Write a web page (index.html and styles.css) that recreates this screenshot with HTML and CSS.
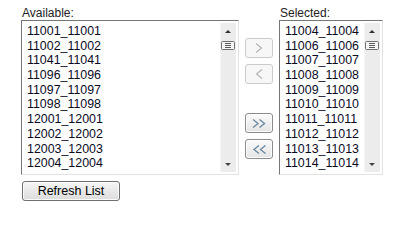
FILE: index.html
```html
<!DOCTYPE html>
<html lang="en">

<head>
    <meta charset="UTF-8">
    <title>List Picker</title>
    <link rel="stylesheet" href="styles.css">
</head>

<body>

    <div class="picker">
        <div class="column">
            <label class="caption">Available:</label>
            <div class="listbox listbox-wide">
                <ul class="items">
                    <li>11001_11001</li>
                    <li>11002_11002</li>
                    <li>11041_11041</li>
                    <li>11096_11096</li>
                    <li>11097_11097</li>
                    <li>11098_11098</li>
                    <li>12001_12001</li>
                    <li>12002_12002</li>
                    <li>12003_12003</li>
                    <li>12004_12004</li>
                </ul>
                <div class="scrollbar">
                    <span class="arrow arrow-up"></span>
                    <svg class="thumb" width="14" height="9" viewBox="0 0 14 9">
                        <rect x="0.5" y="0.5" width="13" height="8" rx="1" fill="#f5f5f5" stroke="#6f6f6f" />
                        <path d="M4 2.5h6M4 4.5h6M4 6.5h6" stroke="#5a5a5a" stroke-width="1" />
                    </svg>
                    <span class="spacer"></span>
                    <span class="arrow arrow-down"></span>
                </div>
            </div>
            <button class="refresh" type="button">Refresh List</button>
        </div>

        <div class="moves">
            <button class="move" type="button" disabled>
                <svg width="8" height="10" viewBox="0 0 8 10">
                    <path d="M1 0.5L6.5 5L1 9.5" fill="none" stroke="#b3b3b3" stroke-width="1.1" />
                </svg>
            </button>
            <button class="move" type="button" disabled>
                <svg width="8" height="10" viewBox="0 0 8 10">
                    <path d="M7 0.5L1.5 5L7 9.5" fill="none" stroke="#b3b3b3" stroke-width="1.1" />
                </svg>
            </button>
            <button class="move move-all" type="button">
                <svg width="15" height="9" viewBox="0 0 15 9">
                    <path d="M1 0.5L6 4.5L1 8.5M7.5 0.5L12.5 4.5L7.5 8.5" fill="none" stroke="#6c8aa2" stroke-width="1.4" />
                </svg>
            </button>
            <button class="move" type="button">
                <svg width="15" height="9" viewBox="0 0 15 9">
                    <path d="M7 0.5L2 4.5L7 8.5M13.5 0.5L8.5 4.5L13.5 8.5" fill="none" stroke="#6c8aa2" stroke-width="1.4" />
                </svg>
            </button>
        </div>

        <div class="column">
            <label class="caption">Selected:</label>
            <div class="listbox listbox-narrow">
                <ul class="items">
                    <li>11004_11004</li>
                    <li>11006_11006</li>
                    <li>11007_11007</li>
                    <li>11008_11008</li>
                    <li>11009_11009</li>
                    <li>11010_11010</li>
                    <li>11011_11011</li>
                    <li>11012_11012</li>
                    <li>11013_11013</li>
                    <li>11014_11014</li>
                </ul>
                <div class="scrollbar">
                    <span class="arrow arrow-up"></span>
                    <svg class="thumb" width="14" height="9" viewBox="0 0 14 9">
                        <rect x="0.5" y="0.5" width="13" height="8" rx="1" fill="#f5f5f5" stroke="#6f6f6f" />
                        <path d="M4 2.5h6M4 4.5h6M4 6.5h6" stroke="#5a5a5a" stroke-width="1" />
                    </svg>
                    <span class="spacer"></span>
                    <span class="arrow arrow-down"></span>
                </div>
            </div>
        </div>
    </div>

</body>

</html>
```

FILE: styles.css
```css
body {
    margin: 0;
    padding: 6px 0 0 21px;
    background: white;
    font-family: "Liberation Sans", Arial, sans-serif;
    color: #000;
}

.picker {
    display: flex;
    align-items: flex-start;
}

.column {
    display: flex;
    flex-direction: column;
    align-items: flex-start;
}

.caption {
    display: block;
    font-size: 12px;
    line-height: 14px;
    padding-left: 1px;
    color: #222;
}

.listbox {
    display: flex;
    height: 153px;
    border: 1px solid;
    border-color: #767676 #e2e2e2 #e2e2e2 #767676;
    background: white;
}

.listbox-wide {
    width: 216px;
}

.listbox-narrow {
    width: 102px;
}

.items {
    flex: 1;
    list-style: none;
    margin: 0;
    padding: 3px 0 0 5px;
    overflow: hidden;
    font-size: 12.4px;
    color: #0a0a1e;
}

.items li {
    height: 14.7px;
    line-height: 14px;
    white-space: nowrap;
}

.scrollbar {
    display: flex;
    flex-direction: column;
    align-items: center;
    width: 16px;
    margin: 2px 2px 2px 0;
    background: #ececec;
    box-shadow: inset 1px 0 0 #f4f4f4;
}

.arrow {
    display: flex;
    justify-content: center;
    align-items: center;
    width: 16px;
    height: 16px;
}

.arrow::before {
    content: "";
    border-left: 3px solid transparent;
    border-right: 3px solid transparent;
}

.arrow-up::before {
    border-bottom: 3px solid #333;
}

.arrow-down::before {
    border-top: 3px solid #444;
}

.thumb {
    display: block;
    margin-top: 2px;
}

.spacer {
    flex: 1;
}

.moves {
    display: flex;
    flex-direction: column;
    width: 28px;
    margin: 32px 6px 0 6px;
}

.move {
    display: flex;
    justify-content: center;
    align-items: center;
    width: 28px;
    height: 20px;
    padding: 0;
    margin-bottom: 6px;
    border: 1px solid #8c8c8c;
    border-radius: 3px;
    background: linear-gradient(#fbfbfb, #e4e4e4);
    box-shadow: inset 0 0 0 1px #fdfdfd;
    cursor: pointer;
}

.move:disabled {
    border-color: #cbcbcb;
    background: #f7f7f7;
    box-shadow: none;
    cursor: default;
}

.move-all {
    margin-top: 23px;
}

.refresh {
    width: 98px;
    height: 20px;
    margin: 6px 0 0 1px;
    padding: 0;
    font-family: "Liberation Sans", Arial, sans-serif;
    font-size: 12.5px;
    color: #000;
    border: 1px solid #707070;
    border-radius: 3px;
    background: linear-gradient(#f6f6f6, #dcdcdc);
    box-shadow: inset 0 0 0 1px #fbfbfb;
    cursor: pointer;
}
```
